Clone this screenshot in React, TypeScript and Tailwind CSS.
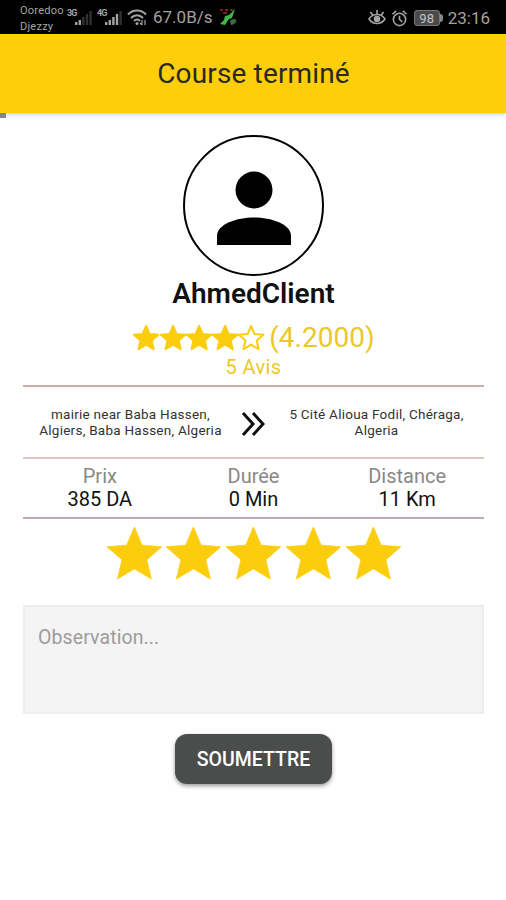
import React from 'react';
import clsx from 'clsx';

const STAR =
  'M12 17.27 18.18 21l-1.64-7.03L22 9.24l-7.19-.61L12 2 9.19 8.63 2 9.24l5.46 4.73L5.82 21z';

const stats = [
  { label: 'Prix', value: '385 DA' },
  { label: 'Durée', value: '0 Min' },
  { label: 'Distance', value: '11 Km' },
];

// Large star used by the rating input
const Star: React.FC<{ className?: string }> = ({ className }) => (
  <svg viewBox="2 2 20 19" className={clsx('overflow-visible', className)}>
    <path d={STAR} fill="currentColor" stroke="currentColor" strokeWidth="0.3" strokeLinejoin="round" />
  </svg>
);

// Small star of the average rating, plumper and optionally hollow
const SmallStar: React.FC<{ filled: boolean }> = ({ filled }) => (
  <svg viewBox="2 2 20 19" className="h-[25px] w-[26.2px] overflow-visible">
    <path
      d={STAR}
      fill={filled ? 'currentColor' : 'none'}
      stroke="currentColor"
      strokeWidth="1.6"
      strokeLinejoin="round"
      transform="translate(12 12) scale(0.94) translate(-12 -12)"
    />
  </svg>
);

const Signal: React.FC<{ label: string; active: number; className?: string }> = ({ label, active, className }) => (
  <div className={clsx('relative h-4 w-[27px]', className)}>
    <span className="absolute top-0 left-0 text-[9px] leading-none font-bold tracking-[-1px]">{label}</span>
    <svg viewBox="0 0 18 14" className="absolute bottom-0 left-[8px] h-[14px] w-[18px]" fill="currentColor">
      {[3, 5, 8, 11, 14].map((h, i) => (
        <rect key={h} x={i * 3.6} y={14 - h} width="2.4" height={h} opacity={i < active ? 1 : 0.3} />
      ))}
    </svg>
  </div>
);

const StatusBar: React.FC = () => (
  <div className="flex h-[34px] items-center bg-black pl-5 pr-4 text-[#a3a3a3]">
    <div className="w-[47px] pt-[3px] text-[11px] leading-[15.5px] tracking-[0.25px]">
      <div>Ooredoo</div>
      <div>Djezzy</div>
    </div>
    <Signal label="3G" active={2} />
    <Signal label="4G" active={4} className="ml-[3px]" />
    <svg viewBox="0 0 20 17" className="ml-[3px] h-[17px] w-5" fill="none" stroke="currentColor" strokeWidth="2">
      <path d="M1 5.5C6 .2 14 .2 19 5.5M4 9C7.5 5.2 12.5 5.2 16 9M7 12c2-2 4-2 6 0" />
      <circle cx="10" cy="14.5" r="1.5" fill="currentColor" stroke="none" />
      <path d="M15 11v5M13 14l2 2M18 16v-5" strokeWidth="1.2" />
    </svg>
    <span className="ml-[6px] w-[62px] whitespace-nowrap pt-[2px] text-[17px]">67.0B/s</span>
    <svg viewBox="0 0 18 18" className="ml-[4px] h-[18px] w-[18px]">
      <path d="M1 2h3M6 2h3M11 2h3M4 5h4" stroke="#7d2018" strokeWidth="1.8" />
      <path d="M16 1 13 10l-3 1-4 6-5-1 4-4 1-4 4-1z" fill="#43b64a" />
      <path d="M11 14c0-3 5-4 6-2s-2 5-5 5z" fill="#3d6b41" />
    </svg>
    <div className="ml-auto flex items-center pt-[2px]">
      <svg viewBox="0 0 18 18" className="h-[18px] w-[18px]" fill="none" stroke="currentColor" strokeWidth="1.6">
        <path d="M1 10c4-6 12-6 16 0-4 6-12 6-16 0zM9 5V1M4.5 6 2.5 3M13.5 6l2-3" />
        <circle cx="9" cy="10" r="2.5" fill="currentColor" />
      </svg>
      <svg viewBox="0 0 18 18" className="ml-[5px] h-[17px] w-[17px]" fill="none" stroke="currentColor" strokeWidth="1.7">
        <circle cx="9" cy="10" r="6.5" />
        <path d="M9 6v4l3 2.5M1.5 4.5l4-3.5M16.5 4.5l-4-3.5" />
      </svg>
      <div className="ml-[6px] flex h-[16px] w-[26px] items-center justify-center rounded-[3px] border border-[#777] bg-[#4a4a4a] text-[13px] leading-none text-[#c4c4c4]">
        98
      </div>
      <div className="h-[8px] w-[3px] rounded-r-sm bg-[#888]" />
      <span className="ml-[5px] text-[17px] leading-5">23:16</span>
    </div>
  </div>
);

const App: React.FC = () => {
  return (
    <div className="h-[900px] w-[506px] overflow-hidden bg-white font-['Roboto',sans-serif] text-[#111]">
      <StatusBar />
      <header className="relative z-10 flex h-[79px] items-center justify-center bg-[#ffce0a] pt-px pl-px shadow-[0_1px_4px_rgba(0,0,0,0.25)]">
        <h1 className="text-[28px] tracking-[0.15px] text-[#2a2a20]">Course terminé</h1>
      </header>
      <div className="relative z-10 h-[5px] w-[6px] bg-[#858585]" />

      <main className="flex flex-col pt-[17px] pr-[22px] pl-[23px]">
        <div className="flex h-[141px] w-[141px] items-center justify-center self-center rounded-full border-[2.5px] border-black">
          <svg viewBox="0 0 74 74" className="mt-[4px] h-[74px] w-[74px]">
            <circle cx="37" cy="19" r="18.5" />
            <path d="M0 74V65C0 53 20 46.5 37 46.5S74 53 74 65V74z" />
          </svg>
        </div>
        <h2 className="h-[32px] text-center text-[28px] leading-[35px] font-semibold">AhmedClient</h2>

        <div className="mt-[13px] flex h-[34px] items-center justify-center text-[#fbcd0d]">
          <div className="flex pb-[2px] pl-px">
            {[1, 2, 3, 4, 5].map((n) => (
              <SmallStar key={n} filled={n < 5} />
            ))}
          </div>
          <span className="ml-[5px] text-[28px] leading-[34px] text-[#ecc826]">(4.2000)</span>
        </div>
        <p className="h-[30px] text-center text-[20px] leading-6 tracking-[0.4px] text-[#ecc826]">5 Avis</p>

        <div className="flex h-[72px] items-center border-t-2 border-[#c9adad] text-center text-[13.5px] tracking-[0.25px] text-[#333]">
          <div className="flex h-[30px] w-[215px] flex-col justify-between leading-[14px]">
            <p>mairie near Baba Hassen,</p>
            <p>Algiers, Baba Hassen, Algeria</p>
          </div>
          <svg viewBox="0 0 24 26" className="mt-[3px] ml-[3px] h-[26px] w-6" fill="none" stroke="#111" strokeWidth="3">
            <path d="M2 2 12 13 2 24M12 2 22 13 12 24" />
          </svg>
          <div className="ml-[4px] flex h-[30px] w-[215px] flex-col justify-between leading-[14px]">
            <p>5 Cité Alioua Fodil, Chéraga,</p>
            <p>Algeria</p>
          </div>
        </div>

        <div className="grid h-[62px] grid-cols-3 border-y-2 border-t-[#dcc8bc] border-b-[#c5a9ad] pt-[6px] text-center text-[20px] leading-[23px]">
          {stats.map((stat) => (
            <div key={stat.label}>
              <div className="text-[#888]">{stat.label}</div>
              <div>{stat.value}</div>
            </div>
          ))}
        </div>

        <div className="mt-2 flex justify-center gap-[5px] text-[#fbcd0d]">
          {[1, 2, 3, 4, 5].map((n) => (
            <Star key={n} className="h-[52px] w-[54.8px]" />
          ))}
        </div>

        <textarea
          className="mt-[26px] h-[109px] w-full resize-none border-2 border-[#ededed] bg-[#f4f4f4] px-[13px] pt-[17px] text-[19.5px] leading-7 tracking-[0.1px] placeholder:text-[#9c9c9c]"
          placeholder="Observation..."
        />

        <button className="mt-5 h-[50px] w-[157px] self-center rounded-[12px] bg-[#4b4d4c] pt-px text-[19.5px] font-medium text-white shadow-[0_2px_4px_rgba(0,0,0,0.4)]">
          SOUMETTRE
        </button>
      </main>
    </div>
  );
};

export default App;
